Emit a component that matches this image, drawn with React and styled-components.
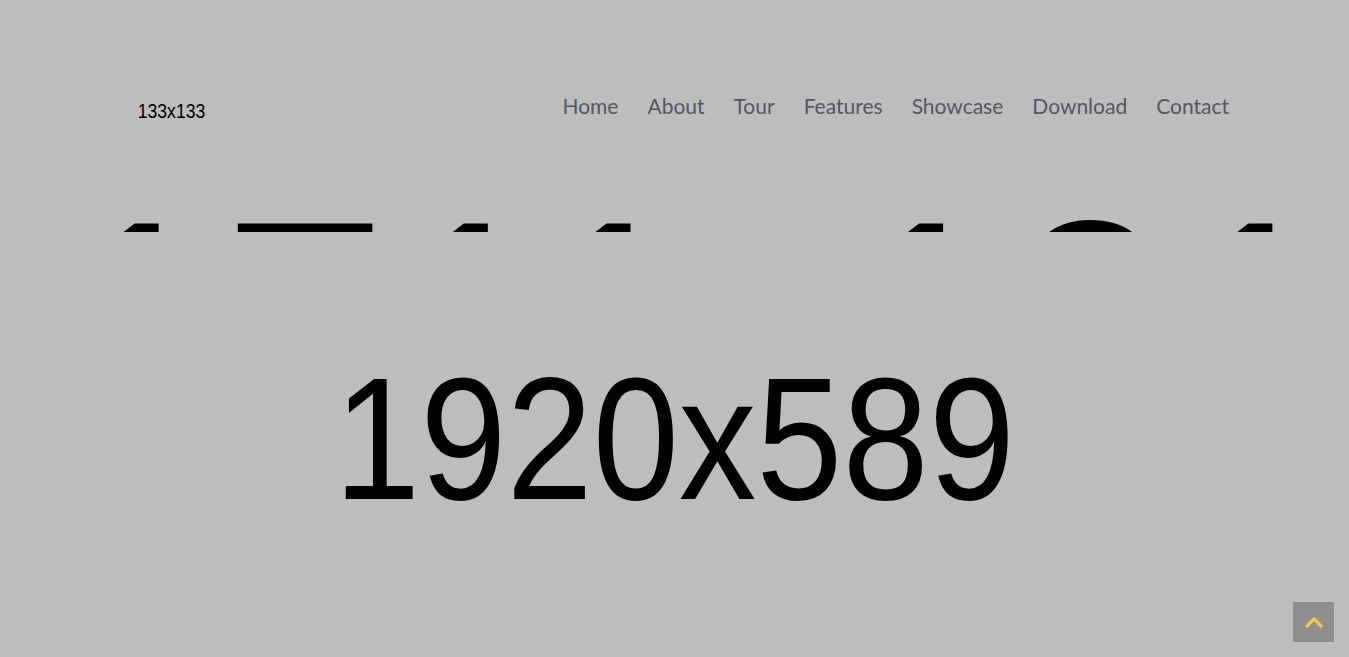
import React from "react";
import styled, { createGlobalStyle } from "styled-components";

const GlobalStyle = createGlobalStyle`
  html, body {
    margin: 0;
    padding: 0;
    background: #bdbdbd;
  }
  body {
    font-family: "Liberation Sans", Arial, sans-serif;
    overflow: hidden;
  }
`;

const NAV = ["Home", "About", "Tour", "Features", "Showcase", "Download", "Contact"];

export default function App() {
  return (
    <Page>
      <GlobalStyle />
      <Header>
        <BackdropText>1711x121</BackdropText>
        <TopBar>
          <Logo>
            <PlaceholderText size={17.6} stretch={1.17}>
              133x133
            </PlaceholderText>
          </Logo>
          <Nav>
            {NAV.map((item) => (
              <NavLink key={item} href="#">
                {item}
              </NavLink>
            ))}
          </Nav>
        </TopBar>
      </Header>

      <Hero>
        <PlaceholderText size={155} stretch={1.12}>
          1920x589
        </PlaceholderText>
      </Hero>

      <ScrollTop aria-label="Back to top">
        <svg width="18" height="12" viewBox="0 0 18 12">
          <polyline
            points="2,10 9,3 16,10"
            fill="none"
            stroke="#f4c84a"
            strokeWidth="3.2"
            strokeLinecap="round"
            strokeLinejoin="round"
          />
        </svg>
      </ScrollTop>
    </Page>
  );
}

const Page = styled.div`
  position: relative;
  width: 100%;
  height: 657px;
  background: #bdbdbd;
  overflow: hidden;
`;

const Header = styled.header`
  position: relative;
  height: 232px;
  overflow: hidden;
`;

// top of a big placeholder picture peeking out under the header
const BackdropText = styled.div`
  position: absolute;
  left: 58px;
  top: 171px;
  font-size: 296px;
  line-height: 1;
  color: #000;
  white-space: nowrap;
  transform: scaleY(1.13);
  transform-origin: top left;
`;

const TopBar = styled.div`
  position: relative;
  display: flex;
  flex-direction: row;
  justify-content: space-between;
  align-items: center;
  padding: 45px 120px 0 105px;
`;

const Logo = styled.div`
  width: 133px;
  height: 133px;
  display: flex;
  align-items: center;
  justify-content: center;
`;

const PlaceholderText = styled.span`
  display: inline-block;
  font-family: "Liberation Sans", Arial, sans-serif;
  font-size: ${({ size }) => size}px;
  line-height: 1;
  color: #000;
  transform: scaleY(${({ stretch }) => stretch});
`;

const Nav = styled.nav`
  display: flex;
  flex-direction: row;
  align-items: center;
  gap: 29px;
  margin-bottom: 12px;
`;

const NavLink = styled.a`
  font-family: Lato, "Open Sans", sans-serif;
  font-size: 21px;
  font-weight: 400;
  color: #515765;
  text-decoration: none;
  line-height: 1;
`;

const Hero = styled.section`
  height: 414px;
  display: flex;
  align-items: center;
  justify-content: center;
`;

const ScrollTop = styled.button`
  position: fixed;
  right: 15px;
  bottom: 15px;
  width: 41px;
  height: 40px;
  border: none;
  padding: 0;
  background: #8f8f8f;
  display: flex;
  align-items: center;
  justify-content: center;
  cursor: pointer;
`;
